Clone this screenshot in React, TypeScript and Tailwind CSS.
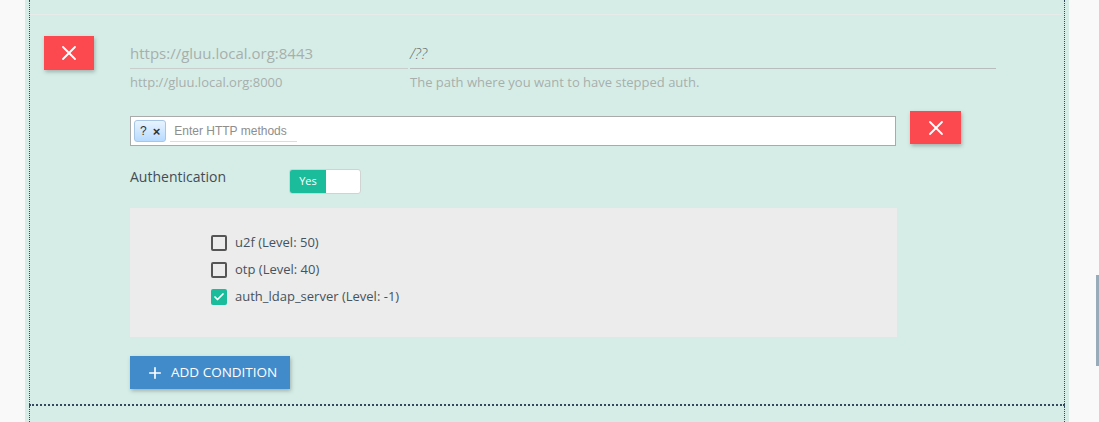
import { Plus, X, Check } from "lucide-react";

const methods = [
  { name: "u2f", level: 50, checked: false },
  { name: "otp", level: 40, checked: false },
  { name: "auth_ldap_server", level: -1, checked: true },
];

function RemoveButton({ className = "" }: { className?: string }) {
  return (
    <button
      className={`flex items-center justify-center bg-[#fc4950] text-white shadow-[1px_2px_4px_rgba(0,0,0,0.25)] ${className}`}
    >
      <X className="w-[24px] h-[24px]" strokeWidth={1.8} />
    </button>
  );
}

export default function App() {
  return (
    <div
      className="w-[1099px] h-[422px] overflow-hidden flex bg-[#f9f9f9]"
      style={{ fontFamily: '"Open Sans", "Noto Sans", sans-serif' }}
    >
      <div className="w-[25px] shrink-0" />

      <main className="w-[1044px] shrink-0 bg-[#d6ede7] px-[4px] flex flex-col">
        <div className="border-x border-dotted border-[#34495e] border-b-2 flex flex-col">
          <div className="h-[14px]" />
          <div className="border-t border-[#e7ebea] mr-[2px]" />

          {/* Condition row */}
          <div className="flex items-start pt-[21px] pl-[14px]">
            <RemoveButton className="w-[50px] h-[34px]" />

            <div className="ml-[36px] flex flex-col">
              <div className="flex gap-[2px]">
                <div className="w-[278px] flex flex-col">
                  <div className="h-[33px] pt-[6px] border-b border-[#c9cdcc] text-[15px] leading-[22px] text-[#a7afac]">
                    https://gluu.local.org:8443
                  </div>
                  <div className="mt-[4px] text-[13px] leading-[18px] text-[#a7afac]">http://gluu.local.org:8000</div>
                </div>
                <div className="w-[586px] flex flex-col">
                  <div className="h-[33px] pt-[6px] border-b border-[#b9bcbc] text-[15px] leading-[22px] text-[#6b6b6b] italic font-light">
                    /??
                  </div>
                  <div className="mt-[4px] text-[13px] leading-[18px] text-[#a7afac]">
                    The path where you want to have stepped auth.
                  </div>
                </div>
              </div>

              {/* HTTP methods */}
              <div className="flex items-start mt-[20px] gap-[14px]">
                <div className="mt-[5px] w-[766px] h-[30px] bg-white border border-[#aaaaaa] flex items-center px-[3px] gap-[4px]">
                  <span
                    className="h-[22px] px-[5px] flex items-center gap-[6px] rounded-[3px] border border-[#a8c6e4] bg-gradient-to-b from-[#e8f4ff] to-[#b8dbff] text-[12px] text-[#333]"
                    style={{ fontFamily: '"Liberation Sans", Arial, sans-serif' }}
                  >
                    ?<span className="text-[13px] font-bold leading-none">×</span>
                  </span>
                  <span
                    className="w-[127px] h-[22px] flex items-center pl-[4px] border-b border-[#dcdcdc] text-[12px] text-[#8e8e8e]"
                    style={{ fontFamily: '"Liberation Sans", Arial, sans-serif' }}
                  >
                    Enter HTTP methods
                  </span>
                </div>
                <RemoveButton className="w-[51px] h-[33px]" />
              </div>

              {/* Authentication toggle */}
              <div className="flex items-start mt-[23px]">
                <span className="w-[159px] -mt-[1px] text-[14px] leading-[18px] text-[#444c55]">Authentication</span>
                <div className="w-[72px] h-[25px] rounded-[3px] border border-[#cfd3d2] bg-white flex overflow-hidden">
                  <span className="w-[36px] bg-[#1abc9c] text-white text-[11px] flex items-center justify-center">
                    Yes
                  </span>
                </div>
              </div>

              {/* ACR list */}
              <div className="mt-[14px] w-[767px] h-[129px] bg-[#ececec] pt-[21px] pl-[81px] flex flex-col">
                {methods.map((m) => (
                  <label key={m.name} className="h-[27px] flex items-center gap-[8px] text-[13px] text-[#47525c]">
                    {m.checked ? (
                      <span className="w-[16px] h-[16px] rounded-[2px] bg-[#1abc9c] flex items-center justify-center">
                        <Check className="w-[12px] h-[12px] text-white" strokeWidth={3.5} />
                      </span>
                    ) : (
                      <span className="w-[16px] h-[16px] rounded-[2px] border-2 border-[#555]" />
                    )}
                    {m.name} (Level: {m.level})
                  </label>
                ))}
              </div>

              <button className="mt-[19px] mb-[15px] w-[160px] h-[33px] bg-[#428bca] text-white text-[13.5px] flex items-center gap-[7px] pl-[16px] shadow-[1px_2px_4px_rgba(0,0,0,0.25)]">
                <Plus className="w-[18px] h-[18px]" strokeWidth={2.2} />
                ADD CONDITION
              </button>
            </div>
          </div>
        </div>
        <div className="flex-1 border-x border-dotted border-[#34495e]" />
      </main>

      <div className="flex-1 flex flex-col items-end pt-[275px]">
        <div className="w-[3px] h-[91px] bg-[#98abb8]" />
      </div>
    </div>
  );
}
